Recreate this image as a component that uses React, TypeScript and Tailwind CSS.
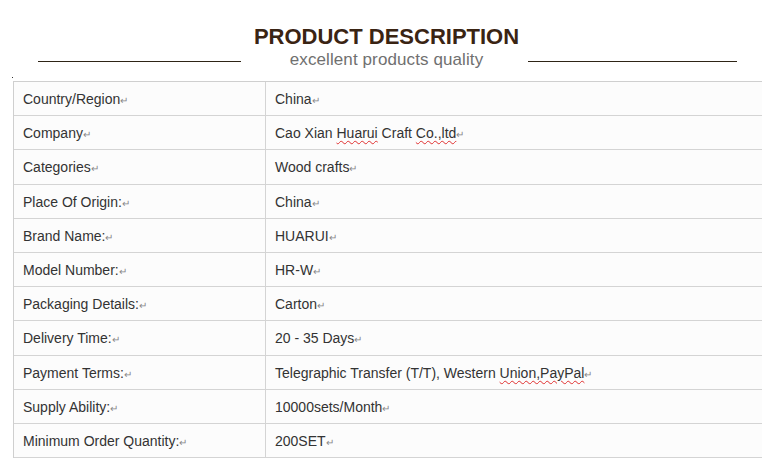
import React from "react";

const rows: { label: string; value: React.ReactNode }[] = [
  { label: "Country/Region", value: "China" },
  {
    label: "Company",
    value: (
      <>
        Cao Xian <Squiggle>Huarui</Squiggle> Craft <Squiggle>Co.,ltd</Squiggle>
      </>
    ),
  },
  { label: "Categories", value: "Wood crafts" },
  { label: "Place Of Origin:", value: "China" },
  { label: "Brand Name:", value: "HUARUI" },
  { label: "Model Number:", value: "HR-W" },
  { label: "Packaging Details:", value: "Carton" },
  { label: "Delivery Time:", value: "20 - 35 Days" },
  {
    label: "Payment Terms:",
    value: (
      <>
        Telegraphic Transfer (T/T), Western <Squiggle>Union,PayPal</Squiggle>
      </>
    ),
  },
  { label: "Supply Ability:", value: "10000sets/Month" },
  { label: "Minimum Order Quantity:", value: "200SET" },
];

function Squiggle({ children }: { children: React.ReactNode }) {
  return (
    <span className="underline decoration-wavy decoration-[#e03030] decoration-1 underline-offset-2">
      {children}
    </span>
  );
}

function Mark() {
  return <span className="text-[10px] text-[#888] align-middle">↵</span>;
}

export default function App() {
  return (
    <div className="w-[779px] h-[461px] bg-white overflow-hidden font-['Liberation_Sans',Arial,sans-serif] text-[#333]">
      <div className="flex items-start pt-[24px]">
        <div className="w-[38px]" />
        <div className="w-[203px] mt-[37px] h-px bg-[#2e2416]" />
        <div className="flex-1 flex flex-col items-center pl-[4px]">
          <div className="text-[22px] leading-[26px] font-bold text-[#3a2413]">PRODUCT DESCRIPTION</div>
          <div className="text-[17px] leading-[18px] text-[#707070] mt-[1px] tracking-[0.1px]">excellent products quality</div>
        </div>
        <div className="w-[209px] mt-[37px] h-px bg-[#2e2416]" />
        <div className="w-[42px]" />
      </div>

      <div className="relative mt-[12px] ml-[13px] w-[749px]">
        <div className="absolute -left-[1px] -top-[4px] w-px h-px bg-[#333]" />
        <div className="border-t border-[#cfcfcf] border-l">
          {rows.map((r) => (
            <div
              key={r.label}
              className="flex h-[34.2px] border-b border-[#d4d4d4] bg-[#fcfcfc] text-[14px]"
            >
              <div className="w-[252px] border-r border-[#d4d4d4] pl-[9px] pt-[2px] flex items-center">
                <span>
                  {r.label}
                  <Mark />
                </span>
              </div>
              <div className="flex-1 pl-[9px] pt-[2px] flex items-center">
                <span>
                  {r.value}
                  <Mark />
                </span>
              </div>
            </div>
          ))}
        </div>
      </div>
    </div>
  );
}
